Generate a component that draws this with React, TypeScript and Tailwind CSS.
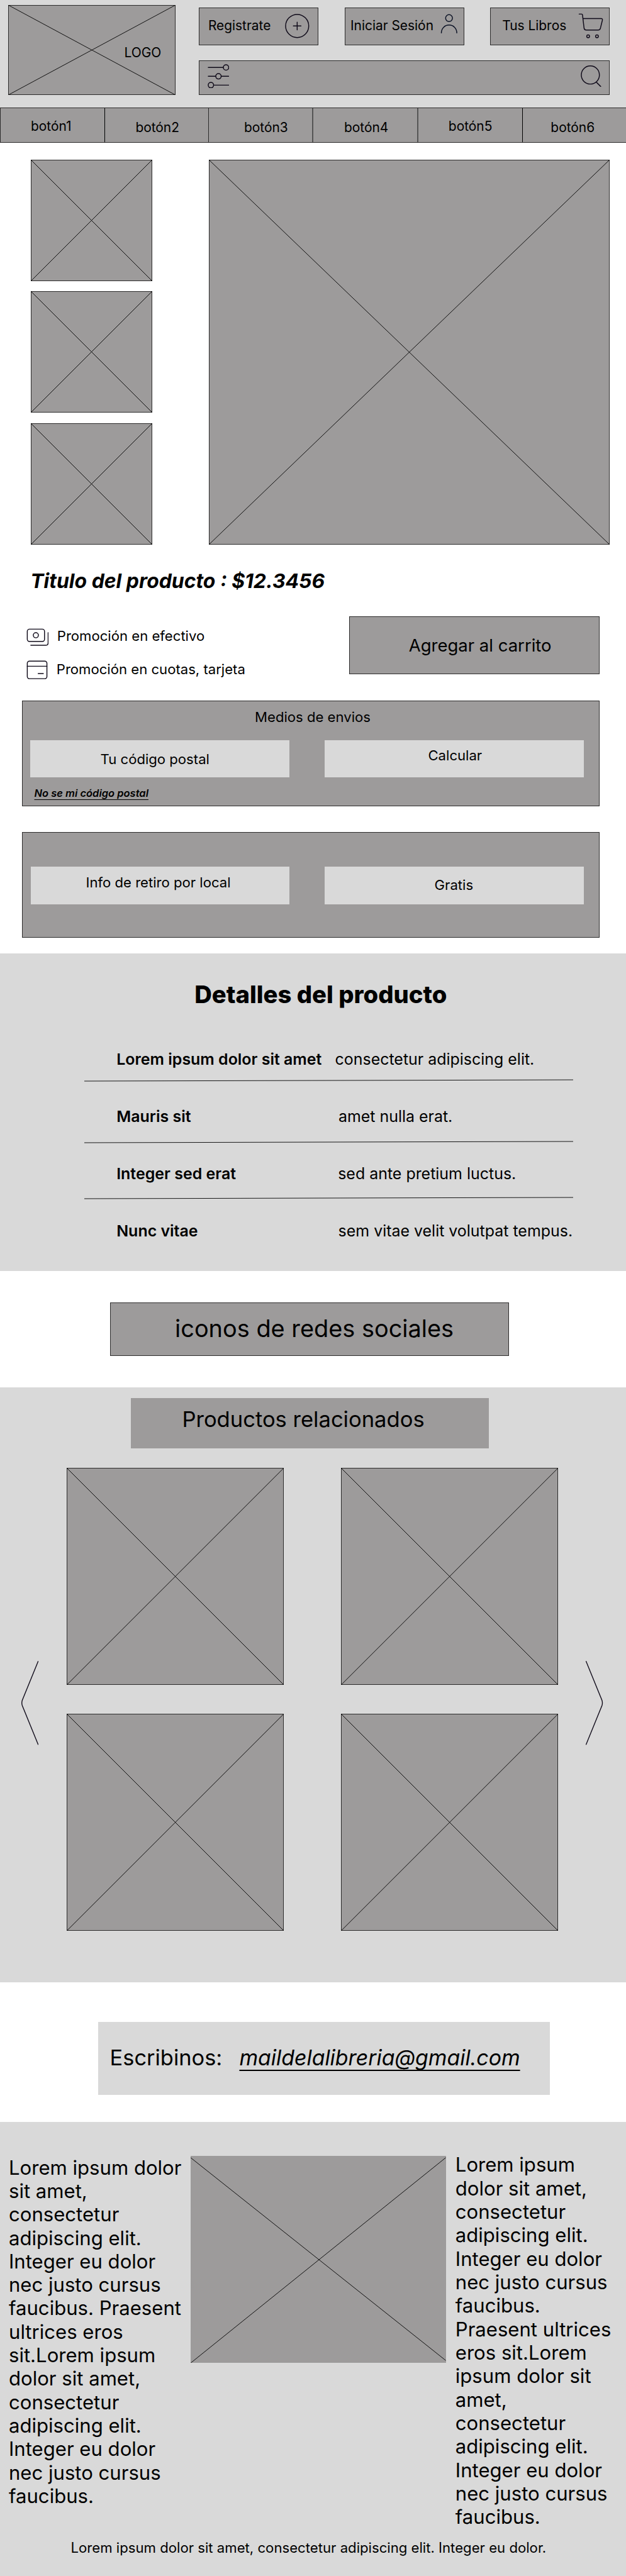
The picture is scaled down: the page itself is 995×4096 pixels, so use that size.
import type { ReactNode } from "react";

function Cross() {
  return (
    <svg className="absolute -inset-px h-[calc(100%+2px)] w-[calc(100%+2px)]" stroke="#000" strokeWidth="0.9">
      <line x1="0" y1="0" x2="100%" y2="100%" />
      <line x1="0" y1="100%" x2="100%" y2="0" />
    </svg>
  );
}

function Placeholder({ className, children }: { className: string; children?: ReactNode }) {
  return (
    <div className={`relative shrink-0 border border-[#2c2b2b] bg-[#9d9b9b] ${className}`}>
      <Cross />
      {children}
    </div>
  );
}

const icon = {
  fill: "none",
  stroke: "#0f0a19",
  strokeWidth: 2.1,
  strokeLinecap: "round" as const,
  strokeLinejoin: "round" as const,
};

function PlusIcon() {
  return (
    <svg viewBox="656 32 56 56" className="mt-[9.1px] mr-[12.8px] ml-auto h-[38.7px] w-[38.7px] shrink-0" {...icon}>
      <circle cx="684" cy="60" r="26.6" />
      <path d="M675.2 60h17.6M684 51.200v17.600" />
    </svg>
  );
}

function PersonIcon() {
  return (
    <svg viewBox="1012 32 40 46" className="mt-[9.1px] mr-[9.4px] ml-auto h-[31.8px] w-[27.6px] shrink-0" {...icon} stroke="#0b1225">
      <circle cx="1031.9" cy="41.8" r="7.9" />
      <path d="M1014.2 76C1014.2 65.5 1022 57.8 1032 57.8S1049.8 65.5 1049.8 76" />
    </svg>
  );
}

function CartIcon() {
  return (
    <svg viewBox="1330 31 58 58" className="mt-[8.4px] mr-[9.2px] ml-auto h-[40.1px] w-[40.1px] shrink-0" {...icon}>
      <path d="M1332.200 33h5.600c1.300 0 2 .7 2.100 1.800l3.600 30.400c.4 3 2 4.500 4.600 4.500h28c2.800 0 4.500-1.500 5-4.200l4.600-18.600c.5-2.200-.6-3.600-2.800-3.600h-41.700" />
      <circle cx="1352.900" cy="84.100" r="3.200" />
      <circle cx="1373.200" cy="84.100" r="3.200" />
    </svg>
  );
}

function SlidersIcon() {
  return (
    <svg viewBox="477 147 50 56" className="mt-[4.6px] ml-[12.8px] h-[38.7px] w-[34.5px]" {...icon}>
      <path d="M478.500 154.700h34.500M478.500 175h17M508.500 175h17M491 195.300h34.500" />
      <circle cx="519.400" cy="154.700" r="6.200" />
      <circle cx="502" cy="175" r="6.200" />
      <circle cx="484.600" cy="195.300" r="6.200" />
    </svg>
  );
}

function SearchIcon() {
  return (
    <svg viewBox="1335 150 48 50" className="mt-[6.7px] mr-[12.4px] ml-auto h-[34.6px] w-[33.2px]" {...icon}>
      <circle cx="1357.200" cy="172" r="20.800" />
      <path d="M1371.600 189.200l9.400 9.400" />
    </svg>
  );
}

function CashIcon() {
  return (
    <svg viewBox="60 1445 52 42" className="mt-[0.9px] h-[29px] w-[35.9px] shrink-0" {...icon}>
      <rect x="62" y="1447" width="39.700" height="28.500" rx="5" />
      <circle cx="81.700" cy="1461" r="5.900" />
      <path d="M110 1455v23.500c0 3.500-2 5.500-5.500 5.500H70" />
    </svg>
  );
}

function CardIcon() {
  return (
    <svg viewBox="60 1519 52 44" className="h-[30.4px] w-[35.9px] shrink-0" {...icon}>
      <rect x="62" y="1520.900" width="45.200" height="40.300" rx="5" />
      <path d="M62 1532.600h45.200M87 1549.400h12" />
    </svg>
  );
}

function HeaderButton({ label, text, children }: { label: string; text: string; children: ReactNode }) {
  return (
    <button className="flex h-[60px] w-[190px] items-start border border-[#2c2b2b] bg-[#9d9b9b] text-left">
      <span className={`shrink-0 text-[20.9px] leading-[24px] whitespace-nowrap ${text}`}>{label}</span>
      {children}
    </button>
  );
}

const nav = [
  { label: "botón1", cell: "w-[165.7px] border-l-[#2c2b2b] pt-[17.1px] pl-[48px]" },
  { label: "botón2", cell: "w-[165.6px] border-l-black pt-[18.3px] pl-[48.7px]" },
  { label: "botón3", cell: "w-[165.7px] border-l-[#2c2b2b] border-r border-r-[#555] pt-[18.9px] pl-[55.7px]" },
  { label: "botón4", cell: "w-[167px] border-l-[#555] border-r border-r-[#555] pt-[18.3px] pl-[49px]" },
  { label: "botón5", cell: "w-[166px] border-l-[#555] pt-[16.2px] pl-[47.9px]" },
  { label: "botón6", cell: "w-[165px] border-l-black pt-[18.3px] pl-[44.4px]" },
];

const details = [
  { label: "Lorem ipsum dolor sit amet", value: "consectetur adipiscing elit.", row: "", labelW: "w-[347.4px]", line: "mt-[17.5px]" },
  { label: "Mauris sit", value: "amet nulla erat.", row: "mt-[39.6px]", labelW: "w-[352.7px]", line: "mt-[24.4px]" },
  { label: "Integer sed erat", value: "sed ante pretium luctus.", row: "mt-[33.1px]", labelW: "w-[352px]", line: "mt-[22.2px]" },
  { label: "Nunc vitae", value: "sem vitae velit volutpat tempus.", row: "mt-[34.9px]", labelW: "w-[352.4px]", line: "" },
];

function Field({ label, text }: { label: string; text: string }) {
  return (
    <div className={`h-[59.6px] w-[411.8px] bg-[#d9d9d9] text-[22.11px] leading-[26px] whitespace-nowrap ${text}`}>{label}</div>
  );
}

const lorem =
  "Lorem ipsum dolor sit amet, consectetur adipiscing elit. Integer eu dolor nec justo cursus faucibus. Praesent ultrices eros sit.Lorem ipsum dolor sit amet, consectetur adipiscing elit. Integer eu dolor nec justo cursus faucibus.";

export default function App() {
  return (
    <div className="flex h-[4096px] w-[995px] flex-col overflow-hidden bg-white font-['Inter',sans-serif] text-black">
      <header className="flex h-[171.4px] shrink-0 items-start bg-[#d9d9d9] pl-[12.7px]">
        <Placeholder className="mt-[8.3px] h-[143.1px] w-[266px]">
          <p className="pt-[62.8px] pl-[183.8px] text-[20.9px] leading-[24px]">LOGO</p>
        </Placeholder>
        <div className="ml-[37.2px] flex w-[653.4px] flex-col pt-[11.8px]">
          <div className="flex justify-between">
            <HeaderButton label="Registrate" text="pt-[15.9px] pl-[14px]">
              <PlusIcon />
            </HeaderButton>
            <HeaderButton label="Iniciar Sesión" text="pt-[16.6px] pl-[8.4px]">
              <PersonIcon />
            </HeaderButton>
            <HeaderButton label="Tus Libros" text="pt-[15.9px] pl-[18px]">
              <CartIcon />
            </HeaderButton>
          </div>
          <div className="mt-[24.3px] flex h-[54.6px] items-start border border-[#2c2b2b] bg-[#9d9b9b]">
            <SlidersIcon />
            <SearchIcon />
          </div>
        </div>
      </header>

      <nav className="flex h-[56px] shrink-0 border-y border-[#2c2b2b] bg-[#9d9b9b]">
        {nav.map((n) => (
          <a key={n.label} className={`shrink-0 border-l text-[20.9px] leading-[24px] ${n.cell}`}>
            {n.label}
          </a>
        ))}
      </nav>

      <section className="flex shrink-0 pt-[26.3px] pl-[48.9px]">
        <div className="flex flex-col gap-[16.6px]">
          <Placeholder className="h-[193px] w-[193px]" />
          <Placeholder className="h-[193px] w-[193px]" />
          <Placeholder className="h-[193px] w-[193px]" />
        </div>
        <Placeholder className="ml-[89.8px] h-[612px] w-[637px]" />
      </section>

      <h1 className="mt-[38.4px] ml-[48.3px] shrink-0 text-[31.91px] leading-[40px] font-bold whitespace-nowrap italic">
        Titulo del producto : $12.3456
      </h1>

      <section className="mt-[35.5px] flex h-[92.6px] shrink-0 items-start justify-between pr-[42.1px] pl-[41.5px] text-[22.11px] leading-[26px]">
        <div className="flex flex-col pt-[18.4px]">
          <div className="flex h-[30px] items-start gap-[13.4px]">
            <CashIcon />
            <p>Promoción en efectivo</p>
          </div>
          <div className="mt-[22.1px] flex items-start gap-[12.4px]">
            <CardIcon />
            <p className="mt-[1.1px]">Promoción en cuotas, tarjeta</p>
          </div>
        </div>
        <button className="flex h-[92.6px] w-[398px] items-start border border-[#2c2b2b] bg-[#9d9b9b] pt-[29.3px] pl-[93.8px] text-left text-[27.5px] leading-[32px]">
          Agregar al carrito
        </button>
      </section>

      <section className="mt-[41.5px] ml-[35.2px] h-[167.7px] w-[917.7px] shrink-0 border border-[#2c2b2b] bg-[#9d9b9b] pt-[12.5px] pl-[12px]">
        <h2 className="pl-[356.9px] text-[22.11px] leading-[26px]">Medios de envios</h2>
        <div className="mt-[23.4px] flex gap-[56.2px]">
          <Field label="Tu código postal" text="pt-[17.1px] pl-[111.4px]" />
          <Field label="Calcular" text="pt-[11.4px] pl-[164.3px]" />
        </div>
        <a className="mt-[14.7px] ml-[6.3px] block text-[16.5px] leading-[20px] font-semibold italic underline decoration-1 underline-offset-[3.5px] [text-decoration-skip-ink:none]">
          No se mi código postal
        </a>
      </section>

      <section className="mt-[41.8px] ml-[35.2px] h-[168px] w-[917.7px] shrink-0 border border-[#2c2b2b] bg-[#9d9b9b] pt-[53.6px] pl-[12.5px]">
        <div className="flex gap-[55.5px]">
          <Field label="Info de retiro por local" text="pt-[11.7px] pl-[87.8px]" />
          <Field label="Gratis" text="pt-[16.5px] pl-[174.6px]" />
        </div>
      </section>

      <section className="mt-[24.9px] h-[504.7px] shrink-0 bg-[#d9d9d9] pt-[42px] whitespace-nowrap">
        <h2 className="pl-[309.2px] text-[38.2px] leading-[46px] font-extrabold">Detalles del producto</h2>
        <div className="mt-[64.3px] text-[24.95px] leading-[30px]">
          {details.map((d) => (
            <div key={d.label}>
              <div className={`flex pl-[185.2px] ${d.row}`}>
                <p className={`shrink-0 font-semibold ${d.labelW}`}>{d.label}</p>
                <p>{d.value}</p>
              </div>
              {d.line && (
                <svg className={`ml-[133.9px] block h-[4px] w-[777.3px] ${d.line}`} viewBox="0 0 777.3 4" stroke="#000" strokeWidth="0.9">
                  <line x1="0" y1="3" x2="777.3" y2="1" />
                </svg>
              )}
            </div>
          ))}
        </div>
      </section>

      <section className="mt-[49.8px] ml-[175.2px] h-[85.7px] w-[634px] shrink-0 border border-[#2c2b2b] bg-[#9d9b9b] pt-[17.4px] pl-[101.9px] text-[37.9px] leading-[46px] whitespace-nowrap">
        iconos de redes sociales
      </section>

      <section className="mt-[49.8px] h-[946.2px] shrink-0 bg-[#d9d9d9] pt-[17.2px]">
        <h2 className="ml-[207.5px] h-[79.3px] w-[569.2px] bg-[#9d9b9b] pt-[13.1px] pl-[81.9px] text-[34.55px] leading-[42px] whitespace-nowrap">
          Productos relacionados
        </h2>
        <div className="mt-[31.3px] flex items-start pl-[34.3px]">
          <svg viewBox="0 0 27.2 133.5" className="mt-[307.3px] h-[133.5px] w-[27.2px] shrink-0" {...icon} strokeWidth="1.4">
            <path d="M26.600 .7L1.400 62.500Q0 66.700 1.400 71L26.600 132.800" />
          </svg>
          <div className="ml-[44.5px] grid shrink-0 grid-cols-[345.3px_345.3px] gap-x-[90.6px] gap-y-[45.3px]">
            <Placeholder className="h-[345.3px]" />
            <Placeholder className="h-[345.3px]" />
            <Placeholder className="h-[345.3px]" />
            <Placeholder className="h-[345.3px]" />
          </div>
          <svg viewBox="0 0 27.2 133.5" className="mt-[307.3px] ml-[44.3px] h-[133.5px] w-[27.2px] shrink-0" {...icon} strokeWidth="1.4">
            <path d="M.6 .7L25.800 62.500Q27.200 66.700 25.800 71L.6 132.800" />
          </svg>
        </div>
      </section>

      <section className="mt-[63.1px] ml-[156.2px] flex h-[115.4px] w-[717.6px] shrink-0 items-start bg-[#d9d9d9] pt-[35.6px] pl-[18.4px] text-[34.4px] leading-[42px] whitespace-nowrap">
        <p>Escribinos:</p>
        <a className="ml-[27.2px] text-[33.85px] italic underline decoration-2 underline-offset-[7px] [text-decoration-skip-ink:none]">
          maildelalibreria@gmail.com
        </a>
      </section>

      <footer className="mt-[42.9px] grow bg-[#d9d9d9]">
        <div className="flex h-[647.7px] items-start text-[31.1px] leading-[37.31px]">
          <p className="mt-[54.8px] ml-[14px] w-[282px] shrink-0">{lorem}</p>
          <div className="mt-[54px] ml-[7.3px] h-[329.4px] w-[405.5px] shrink-0 bg-[#9d9b9b]">
            <svg className="block h-full w-full" viewBox="0 0 405.5 329.4" stroke="#000" strokeWidth="0.9">
              <path d="M0 2.800L405.500 325.300M0 329.400L405.500 2.800" />
            </svg>
          </div>
          <p className="mt-[50.7px] ml-[15px] w-[255px] shrink-0">{lorem}</p>
        </div>
        <p className="mt-[16.1px] pl-[112.5px] text-[22.16px] leading-[26px] whitespace-nowrap">
          Lorem ipsum dolor sit amet, consectetur adipiscing elit. Integer eu dolor.
        </p>
      </footer>
    </div>
  );
}
